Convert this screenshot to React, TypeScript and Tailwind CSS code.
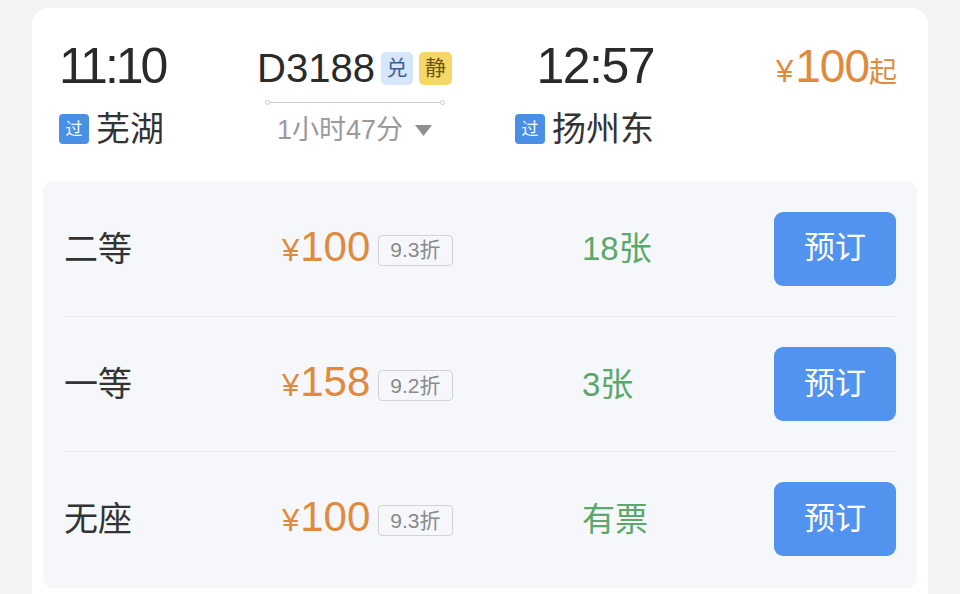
import React from 'react';

const seats = [
  { name: '二等', price: 100, discount: '9.3折', left: '18张' },
  { name: '一等', price: 158, discount: '9.2折', left: '3张' },
  { name: '无座', price: 100, discount: '9.3折', left: '有票' },
];

const font = { fontFamily: '"Liberation Sans", "Noto Sans CJK SC", sans-serif' };

function PassTag() {
  return (
    <span className="inline-flex h-[30px] w-[30px] items-center justify-center rounded-[4px] bg-[#4a8fe6] text-[17px] leading-none text-white">
      过
    </span>
  );
}

export default function App() {
  return (
    <div className="min-h-[594px] bg-[#f3f3f3] px-[32px] pt-[8px] text-[#333]" style={font}>
      <div className="rounded-t-[16px] bg-white px-[11px] pb-[20px]">
        {/* train header */}
        <div className="flex items-start pl-[16px] pr-[20px] pt-[33px]">
          <div className="w-[198px]">
            <div className="text-[50px] leading-[50px] tracking-[-3px] text-[#2a2a2a]">11:10</div>
            <div className="mt-[21px] flex items-center gap-[7px]">
              <PassTag />
              <span className="text-[34px] leading-[34px] text-[#333]">芜湖</span>
            </div>
          </div>

          <div className="flex w-[195px] flex-col items-center">
            <div className="flex items-center gap-[6px] pt-[7px]">
              <span className="text-[40px] leading-[40px] text-[#2a2a2a]">D3188</span>
              <span className="flex h-[33px] w-[32px] items-center justify-center rounded-[5px] bg-[#d6e6fb] text-[21px] text-[#3b5f93]">
                兑
              </span>
              <span className="flex h-[33px] w-[33px] items-center justify-center rounded-[5px] bg-[#f5d668] text-[21px] text-[#6b5410]">
                静
              </span>
            </div>
            <div className="mt-[12px] flex w-[180px] items-center">
              <span className="h-[5px] w-[5px] rounded-full border border-[#c9c9c9]" />
              <span className="h-px flex-1 bg-[#cfcfcf]" />
              <span className="h-[5px] w-[5px] rounded-full border border-[#c9c9c9]" />
            </div>
            <div className="mt-[10px] flex items-center gap-[12px] text-[27px] leading-[30px] text-[#9a9a9a]">
              <span>1小时47分</span>
              <svg width="17" height="11" viewBox="0 0 17 11">
                <path d="M0 0h17L8.5 11z" fill="#8f8f8f" />
              </svg>
            </div>
          </div>

          <div className="flex w-[202px] flex-col items-end">
            <div className="text-[50px] leading-[50px] tracking-[-1.5px] text-[#2a2a2a]">12:57</div>
            <div className="mt-[21px] flex items-center gap-[7px]">
              <PassTag />
              <span className="text-[34px] leading-[34px] text-[#333]">扬州东</span>
            </div>
          </div>

          <div className="flex flex-1 items-baseline justify-end pt-[2px] text-[#e08a3e]">
            <span className="text-[31px]">¥</span>
            <span className="ml-[2px] text-[46px] leading-[46px] tracking-[-1px]">100</span>
            <span className="text-[28px]">起</span>
          </div>
        </div>

        {/* seat panel */}
        <div className="mt-[35px] rounded-[10px] bg-[#f5f7fa] px-[21px] pb-[2px]">
          {seats.map((s, i) => (
            <div
              key={s.name}
              className={`flex h-[135px] items-center ${i > 0 ? 'border-t border-[#e6e9ee]' : ''}`}
            >
              <div className="w-[218px] text-[34px] leading-none text-[#333]">{s.name}</div>
              <div className="mt-[3px] flex w-[300px] items-center">
                <div className="flex items-baseline text-[#e08a3e]">
                  <span className="text-[31px]">¥</span>
                  <span className="ml-[1px] text-[42px] leading-[42px]">{s.price}</span>
                </div>
                <span className="ml-[8px] flex h-[31px] items-center rounded-[4px] border border-[#d3d3d3] px-[11px] text-[21px] text-[#8a8a8a]">
                  {s.discount}
                </span>
              </div>
              <div className="flex-1 text-[33px] leading-none text-[#5ba86d]">{s.left}</div>
              <button className="flex h-[74px] w-[122px] items-center justify-center rounded-[9px] bg-[#5193ee] text-[31px] text-white">
                预订
              </button>
            </div>
          ))}
        </div>
      </div>
    </div>
  );
}
